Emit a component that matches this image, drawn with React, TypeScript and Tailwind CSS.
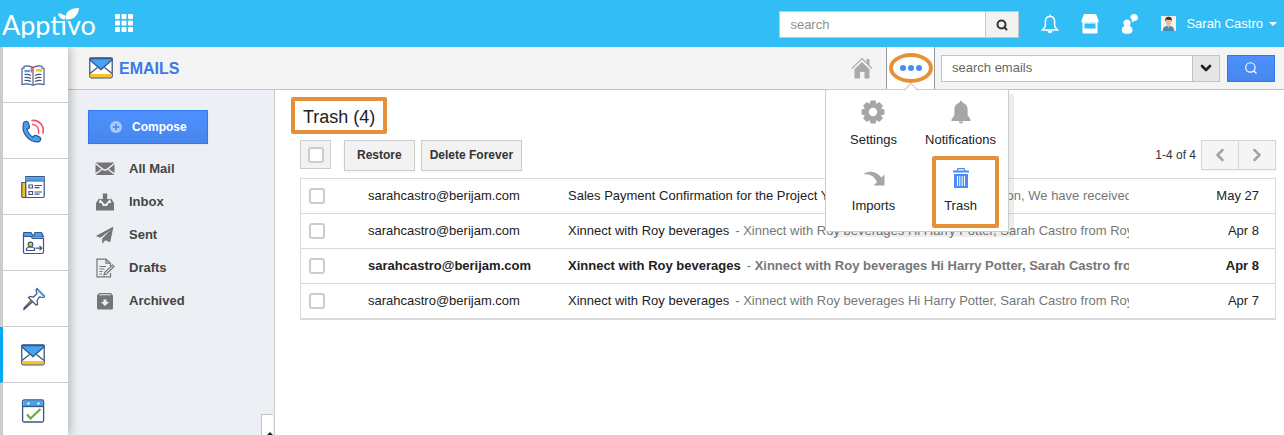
import type { ReactNode } from "react";
import clsx from "clsx";
import { ChevronDown, ChevronLeft, ChevronRight, Search } from "lucide-react";

const NAVY = "#3b5684";
const BLUE = "#42a4f5";
const YELLOW = "#fdc41f";

interface IconProps {
  className?: string;
}

interface Email {
  id: number;
  from: string;
  subject: string;
  preview: string;
  date: string;
  unread?: boolean;
}

const emails: Email[] = [
  {
    id: 1,
    from: "sarahcastro@berijam.com",
    subject: "Sales Payment Confirmation for the Project YMCA Inc",
    preview: "Payment Confirmation, We have received your payment",
    date: "May 27",
  },
  {
    id: 2,
    from: "sarahcastro@berijam.com",
    subject: "Xinnect with Roy beverages",
    preview: "Xinnect with Roy beverages Hi Harry Potter, Sarah Castro from Roy beverages",
    date: "Apr 8",
  },
  {
    id: 3,
    from: "sarahcastro@berijam.com",
    subject: "Xinnect with Roy beverages",
    preview: "Xinnect with Roy beverages Hi Harry Potter, Sarah Castro from Roy beverages",
    date: "Apr 8",
    unread: true,
  },
  {
    id: 4,
    from: "sarahcastro@berijam.com",
    subject: "Xinnect with Roy beverages",
    preview: "Xinnect with Roy beverages Hi Harry Potter, Sarah Castro from Roy beverages",
    date: "Apr 7",
  },
];

function EnvelopeIcon({ className }: IconProps) {
  return (
    <svg viewBox="0 0 24 22" className={className} fill="none" stroke={NAVY} strokeWidth="1.3">
      <rect x="0.8" y="0.8" width="22.4" height="20" rx="1.5" fill="#fff" />
      <path d="M1.3 17h21.4v3.3H1.3z" fill={YELLOW} stroke="none" />
      <path d="M1 16.500l7.500-6M23 16.500l-7.500-6" />
      <path d="M1 1.500h22v1.500L12 12.600 1 3z" fill={BLUE} />
    </svg>
  );
}

function BookIcon() {
  return (
    <svg viewBox="0 0 24 24" className="size-6" fill="none" stroke={NAVY} strokeWidth="1.1">
      <path d="M12 4.500C9 2.800 5 2.800 3 3.200v2H1v16.300c4-1 8-.8 11 .8 3-1.600 7-1.800 11-.8V5.200h-2v-2c-2-.4-6-.4-9 1.300z" fill="#fff" />
      <path d="M12 5v17" />
      <path d="M3.500 8.500c2-.8 4-.8 5.500-.3" stroke={BLUE} strokeWidth="2.400" />
      <path d="M10.700 3v6.500" stroke="#f0566f" strokeWidth="2" />
      <path d="M15 6.200c2-.8 4-.7 6 0v3c-2-.7-4-.7-6-.5z" fill={YELLOW} stroke="none" />
      <path d="M3.500 11.500c2.500-.4 4.500 0 6.500 1M3.500 14.500c2.500-.4 4.500 0 6.500 1M3.500 17.500c2.500-.4 4.500 0 6.500 1M20.500 11.500c-2.500-.4-4.500 0-6.500 1M20.500 14.500c-2.500-.4-4.500 0-6.500 1M20.500 17.500c-2.500-.4-4.500 0-6.500 1" />
    </svg>
  );
}

function PhoneIcon() {
  return (
    <svg viewBox="0 0 24 24" className="size-6" fill="none" strokeLinecap="round">
      <g stroke={NAVY}>
        <path d="M4 7c-1.200 6 5 14 11.500 14" strokeWidth="5" />
        <path d="M5 5l.8 2.500M14.500 19l2.500 1.200" strokeWidth="6.400" />
      </g>
      <g stroke={BLUE}>
        <path d="M4 7c-1.200 6 5 14 11.500 14" strokeWidth="2.600" />
        <path d="M5 5l.8 2.500M14.500 19l2.500 1.200" strokeWidth="4" />
      </g>
      <path d="M11.500 5.500c4-.3 7 3.500 6 9" stroke="#f0566f" strokeWidth="1.500" />
      <path d="M11 1.500c7-.8 12.500 5 11 12.500" stroke="#f0566f" strokeWidth="1.600" />
    </svg>
  );
}

function NewsIcon() {
  return (
    <svg viewBox="0 0 24 24" className="size-6" fill="none" stroke={NAVY} strokeWidth="1.2">
      <path d="M.8 7.500h4v15H2a1.500 1.500 0 0 1-1.200-1.500z" fill={YELLOW} />
      <path d="M4.800 1.500h18.400V21a1.500 1.500 0 0 1-1.500 1.500H4.800z" fill="#fff" />
      <path d="M5.400 2.100h17.200v3.700H5.400z" fill={BLUE} stroke="none" />
      <path d="M4.800 6h18.400M8 10h3.500v3H8zM8 16.500h3.500v3H8zM13.500 10.500h7.500M13.500 12.700h5M13.500 17h7.500M13.500 19.200h5" />
    </svg>
  );
}

function ContactCardIcon() {
  return (
    <svg viewBox="0 0 24 24" className="size-6" fill="none" stroke={NAVY} strokeWidth="1.2">
      <path d="M2.500 6V2.500a1 1 0 0 1 1-1H10L11.500 4H13l1-2.500h6a1 1 0 0 1 1 1L22.500 6z" fill={BLUE} />
      <path d="M2.500 5.500H10L11.500 7.500h11V21a1.500 1.500 0 0 1-1.500 1.500H4A1.500 1.500 0 0 1 2.500 21z" fill="#fff" />
      <path d="M5.500 19.500v-2.200c.8-1 2-1.300 4-1.300s3.200.3 4 1.300v2.200z" />
      <circle cx="9.500" cy="13.500" r="2.300" fill={YELLOW} />
      <path d="M14.500 17.200h6.300M18.500 15l2.300 2.200-2.300 2.200" />
    </svg>
  );
}

function PinIcon() {
  return (
    <svg viewBox="0 0 24 24" className="size-6" fill="none" stroke={NAVY} strokeWidth="1.2">
      <path d="M3 22.500L13 13.500l-1.500-1.500-8.500 9z" fill={YELLOW} />
      <path d="M16 1.500l8 8-1.500 1-4-.5-2.500 3.500.5 4L15 18 7.500 10.500 9 9.500l3.500.5L16 6.500l-1-3.500z" fill="#fff" />
      <path d="M17 3l5.500 5.500" stroke={BLUE} strokeWidth="2.200" />
    </svg>
  );
}

function TaskIcon() {
  return (
    <svg viewBox="0 0 24 24" className="size-6" fill="none" stroke={NAVY} strokeWidth="1.3">
      <rect x="1.600" y="1" width="21" height="22" rx="1.500" fill="#fff" />
      <path d="M2.300 1.700h19.600v5.300H2.300z" fill={BLUE} stroke="none" />
      <path d="M1.600 7.500h21" />
      <path d="M6.500 4.500h2M16.500 4.500h2" stroke="#fff" strokeWidth="2" />
      <path d="M6 15.500l3.500 4L19.500 10" stroke="#65ad35" strokeWidth="2.200" />
    </svg>
  );
}

function StoreIcon() {
  return (
    <svg viewBox="0 0 18 20" className="h-5 w-[18px]" fill="#fff">
      <path d="M3 0h12l2.500 6.500v1.200c0 1.600-2.600 1.600-2.900 0-.3 1.600-2.500 1.600-2.800 0-.3 1.600-2.500 1.600-2.800 0-.3 1.600-2.500 1.600-2.800 0-.3 1.600-2.500 1.600-2.800 0-.3 1.600-2.900 1.600-2.900 0V6.500z" />
      <path fillRule="evenodd" d="M1.500 8.500h15V19.500h-15zM3.500 9.500v5h11v-5z" />
    </svg>
  );
}

function ChatPersonIcon() {
  return (
    <svg viewBox="0 0 18 20" className="h-5 w-[18px]" fill="#fff">
      <circle cx="6" cy="9" r="3.500" />
      <path d="M.8 16c0-3.200 2.500-4.500 5.200-4.500s5.500 1.300 5.500 4.500-2.500 3.800-5.500 3.800S.8 19.200.8 16z" />
      <path d="M13 0c2.200 0 4 1.500 4 3.500S15.500 7 13.500 7L10.500 8.500l.7-2.500C10 5.300 9.400 4.500 9.400 3.500 9.400 1.500 11 0 13 0z" />
    </svg>
  );
}

function BellOutlineIcon() {
  return (
    <svg viewBox="0 0 18 20" className="h-5 w-[18px]" fill="none" stroke="#fff" strokeWidth="1.500">
      <path d="M9 2.500c-3 0-4.600 2.200-4.600 5V11c0 2-1.200 3.500-3 5h15.200c-1.800-1.500-3-3-3-5V7.500c0-2.800-1.600-5-4.600-5zM9 2.500V.5" />
      <path d="M6.500 17h5c-.3 1.600-1.200 2.200-2.500 2.200S6.800 18.600 6.500 17z" fill="#fff" stroke="none" />
    </svg>
  );
}

function Avatar() {
  return (
    <svg viewBox="0 0 15 15" className="size-[15px]">
      <path d="M0 0h15v15H0z" fill="#f3efec" />
      <path d="M1.800 15c.2-4 2-5 5.700-5s5.500 1 5.700 5z" fill="#3e8fb8" />
      <path d="M5.700 9h3.600L7.500 12z" fill="#e9c3a4" />
      <ellipse cx="7.500" cy="5.800" rx="2.800" ry="3.600" fill="#e9bd9a" />
      <path d="M4.300 5.500C3.800 2 5.500.8 7.800.8s3.700 1.700 3 4.700L10 3.800C8 4 6.500 3.800 5.500 3.500z" fill="#40302b" />
    </svg>
  );
}

function HomeIcon() {
  return (
    <svg viewBox="0 0 22 22" className="size-[22px]" fill="#a9a9a9">
      <path d="M3.500 12.300L11 5l7.500 7.300v9.200h-5V15H9v6.500H3.500z" />
      <path d="M15.500 2h3v6.500l-3-3z" />
      <path d="M.8 11.700L11 1.500l10.200 10.200" fill="none" stroke="#a9a9a9" strokeWidth="1.200" />
    </svg>
  );
}

function GearIcon() {
  return (
    <svg viewBox="-12 -12 24 24" className="size-6" fill="#a6a6a6">
      {[0, 45, 90, 135].map((angle) => (
        <path key={angle} d="M-2.500-11.500h5l1 4v15l-1 4h-5l-1-4v-15z" transform={`rotate(${angle})`} />
      ))}
      <circle r="8.800" />
      <circle r="4.200" fill="#fff" />
    </svg>
  );
}

function BellIcon() {
  return (
    <svg viewBox="0 0 24 24" className="size-6" fill="#a6a6a6">
      <path d="M12 1c1 0 1.500.7 1.600 1.700 3.400.8 5 3.300 5 6.800V15l2.900 4.500V21h-19v-1.500L5.400 15V9.500c0-3.500 1.600-6 5-6.800C10.500 1.700 11 1 12 1z" />
      <path d="M9.700 21.500h4.600c-.2 1.300-1 2-2.300 2s-2.100-.7-2.300-2z" />
    </svg>
  );
}

function ImportIcon() {
  return (
    <svg viewBox="0 0 24 24" className="size-6" fill="#a6a6a6">
      <path d="M1.500 8.500C4.500 5 13 4 19.500 11.500L22.500 8.500V19.500H11.500L15 16C12.500 10.500 8 7.500 1.500 8.500z" />
    </svg>
  );
}

function TrashIcon() {
  return (
    <svg viewBox="0 0 24 24" className="size-6" fill="#4a8cf7">
      <path fillRule="evenodd" d="M8.500 2h7l1 2.500H20v2H4v-2h3.500zM9.300 3.200l-.5 1.300h6.400l-.5-1.300z" />
      <path fillRule="evenodd" d="M5 8h14v14H5zM8 10v10h1V10zm2.300 0v10h1V10zm2.400 0v10h1V10zm2.300 0v10h1V10z" />
    </svg>
  );
}

function AllMailIcon() {
  return (
    <svg viewBox="0 0 20 20" className="size-5" fill="#757575">
      <path d="M.5 3.500h19l-7.500 6c-1.200 1-2.800 1-4 0zM.5 5.200L6.300 10 .5 14zM19.500 5.200L13.700 10l5.800 4zM7.300 10.800c1.600 1.300 3.800 1.300 5.400 0L19.500 16H.5z" />
    </svg>
  );
}

function InboxIcon() {
  return (
    <svg viewBox="0 0 20 20" className="size-5" fill="#757575">
      <path d="M7.800 1.500h4.400V7h3L10 12.500 4.800 7h3z" />
      <path d="M4 6.500H5L3.800 11h2.700l1.300 3h4.400l1.300-3h2.700L15 6.500h1l3 4.500v7.500H1V11z" />
    </svg>
  );
}

function SentIcon() {
  return (
    <svg viewBox="0 0 20 20" className="size-5" fill="#757575">
      <path d="M18.500 1.500L.8 11l4.700 1.800L15.500 5 7.200 13.500V19l3-3.800 5 2z" />
    </svg>
  );
}

function DraftIcon() {
  return (
    <svg viewBox="0 0 20 20" className="size-5" fill="none" stroke="#757575" strokeWidth="1.200">
      <path d="M15.500 15v3.800h-13.500V1.200H11l4.500 4V8M11 1.200v4h4.500" />
      <path d="M4.500 8.500H11M4.500 11h5M4.500 13.500h3M4.500 16h2.500" />
      <path d="M17.500 7l1.500 1.500-7.500 7.500-2.500.8.800-2.500z" fill="#ecf0f5" />
    </svg>
  );
}

function ArchiveIcon() {
  return (
    <svg viewBox="0 0 20 20" className="size-5">
      <path fillRule="evenodd" fill="#757575" d="M4 2h12l2 2.500V17a1.500 1.500 0 0 1-1.500 1.500h-13A1.500 1.500 0 0 1 2 17V4.500zM4.500 3.200L3.800 4.300h12.400l-.7-1.100zM8.500 8.500V11H5.800l4.200 4 4.200-4h-2.700V8.500z" />
    </svg>
  );
}

const apps = [
  { label: "Contacts book", icon: <BookIcon /> },
  { label: "Calls", icon: <PhoneIcon /> },
  { label: "News", icon: <NewsIcon /> },
  { label: "Contact cards", icon: <ContactCardIcon /> },
  { label: "Pinned", icon: <PinIcon /> },
  { label: "Emails", icon: <EnvelopeIcon className="h-[22px] w-6" />, active: true },
  { label: "Tasks", icon: <TaskIcon /> },
];

const folders = [
  { label: "All Mail", icon: <AllMailIcon /> },
  { label: "Inbox", icon: <InboxIcon /> },
  { label: "Sent", icon: <SentIcon /> },
  { label: "Drafts", icon: <DraftIcon /> },
  { label: "Archived", icon: <ArchiveIcon /> },
];

function Logo() {
  return (
    <a href="#" className="relative block h-[38px] overflow-hidden pt-[9px] font-['Lato',sans-serif] text-[27px] leading-8 text-white">
      Apptivo
      <svg viewBox="0 0 22 12" className="absolute top-2 right-4 h-3 w-[22px]" fill="#fff">
        <path d="M8 11.500C6.500 4 12 0 21 0c-.5 7-5 12-13 11.500z" />
        <path d="M7 11.500C3 11.500 1 9 0 5.500c4-.3 7 1.500 7 6z" />
      </svg>
    </a>
  );
}

function TopBar() {
  return (
    <header className="relative z-20 flex h-[47px] shrink-0 items-center bg-[#32bdf5] pr-[7px] pl-0.5 text-white">
      <div className="self-start">
        <Logo />
      </div>
      <button type="button" aria-label="Apps" className="mb-px ml-[19px]">
        <svg viewBox="0 0 18 18" className="size-[18px]" fill="#fff">
          {[0, 6.5, 13].map((y) =>
            [0, 6.5, 13].map((x) => <rect key={`${x}-${y}`} x={x} y={y} width="5" height="5" rx="1" />)
          )}
        </svg>
      </button>
      <form className="mt-0.5 ml-auto flex h-[27px] w-60 border border-[#c6c6c6] bg-white">
        <input
          type="search"
          aria-label="Search"
          placeholder="search"
          className="min-w-0 flex-1 px-2.5 text-[13px] text-gray-800 outline-none placeholder:text-[#8e8e8e]"
        />
        <button type="button" aria-label="Go" className="flex w-[33px] items-center justify-center border-l border-[#c6c6c6] bg-[#f2f2f2]">
          <Search className="size-3 text-[#333]" strokeWidth={4} />
        </button>
      </form>
      <div className="ml-[22px] flex items-center gap-[22px]">
        <button type="button" aria-label="Notifications"><BellOutlineIcon /></button>
        <button type="button" aria-label="App store"><StoreIcon /></button>
        <button type="button" aria-label="Chat"><ChatPersonIcon /></button>
        <button type="button" className="flex items-center text-[13px]">
          <Avatar />
          <span className="ml-2.5">Sarah Castro</span>
          <svg viewBox="0 0 8 4" className="ml-1.5 h-1 w-2" fill="#fff">
            <path d="M0 0h8L4 4z" />
          </svg>
        </button>
      </div>
    </header>
  );
}

function AppRail() {
  return (
    <nav aria-label="Apps" className="relative z-10 w-[68px] shrink-0 bg-white shadow-[3px_0_8px_rgba(0,0,0,0.22)]">
      {apps.map((app) => (
        <a
          key={app.label}
          href="#"
          aria-label={app.label}
          className={clsx(
            "flex h-14 items-center justify-center border-b border-l-[3px] border-b-[#ccc] pr-[5px]",
            app.active ? "border-l-[#03a9f4]" : "border-l-[#ccc]"
          )}
        >
          {app.icon}
        </a>
      ))}
    </nav>
  );
}

function MenuItem({ label, icon, highlighted }: { label: string; icon: ReactNode; highlighted?: boolean }) {
  return (
    <button
      type="button"
      className={clsx(
        "flex flex-col items-center gap-1.5 justify-self-center text-[13px] leading-5 text-[#222]",
        highlighted && "h-[72px] w-[67px] rounded-xs border-4 border-[#e69138] pt-1.5 pr-2.5"
      )}
    >
      {icon}
      {label}
    </button>
  );
}

function MoreMenu() {
  return (
    <div className="relative flex w-[49px] items-center justify-center self-stretch border-x border-[#999] bg-white">
      <button
        type="button"
        aria-label="More"
        className="flex h-[30px] w-11 shrink-0 items-center justify-center gap-0.5 rounded-[50%] border-4 border-[#e69138]"
      >
        <span className="size-1.5 rounded-full bg-[#4a8cf7]" />
        <span className="size-1.5 rounded-full bg-[#4a8cf7]" />
        <span className="size-1.5 rounded-full bg-[#4a8cf7]" />
      </button>
      <div className="absolute top-full -left-[62px] z-20 grid h-[143px] w-[184px] grid-cols-2 grid-rows-[56px_72px] rounded-xs border border-[#ccc] bg-white px-1 pt-2.5 shadow-[5px_5px_0_rgba(0,0,0,0.07)]">
        <svg viewBox="0 0 14 8" className="absolute -top-[7px] left-[78px] h-2 w-3.5" fill="#fff" stroke="#aaa">
          <path d="M0 7.500L7 .5l7 7" />
        </svg>
        <MenuItem label="Settings" icon={<GearIcon />} />
        <MenuItem label="Notifications" icon={<BellIcon />} />
        <div className="grid pt-2.5">
          <MenuItem label="Imports" icon={<ImportIcon />} />
        </div>
        <div className="grid pl-2.5">
          <MenuItem label="Trash" icon={<TrashIcon />} highlighted />
        </div>
      </div>
    </div>
  );
}

function SubHeader() {
  return (
    <div className="flex h-[43px] shrink-0 items-center border-b border-[#c3c3c3] bg-[#f4f4f4] pr-[9px] pl-[21px]">
      <EnvelopeIcon className="h-[22px] w-6" />
      <h1 className="ml-1.5 pt-0.5 text-base font-bold text-[#3b78e7]">EMAILS</h1>
      <a href="#" aria-label="Home" className="mr-[13px] ml-auto">
        <HomeIcon />
      </a>
      <MoreMenu />
      <form className="ml-1.5 flex items-center">
        <div className="flex h-[27px] w-[279px] border border-[#c3c3c3] bg-white">
          <input
            type="search"
            aria-label="Search emails"
            placeholder="search emails"
            className="min-w-0 flex-1 px-2.5 text-[13px] text-gray-800 outline-none placeholder:text-[#666]"
          />
          <button type="button" aria-label="Search options" className="flex w-[27px] items-center justify-center border-l border-[#c3c3c3] bg-[#e6e6e6]">
            <ChevronDown className="size-4 text-[#222]" strokeWidth={4} />
          </button>
        </div>
        <button type="button" aria-label="Search" className="ml-[7px] flex h-[27px] w-12 items-center justify-center border border-[#3079ed] bg-linear-to-b from-[#4d90fe] to-[#4787ed]">
          <Search className="size-3.5 text-white" />
        </button>
      </form>
    </div>
  );
}

function Sidebar() {
  return (
    <aside className="flex w-[207px] shrink-0 flex-col border-r border-[#ccc] bg-[#ecf0f5] pt-5">
      <button
        type="button"
        className="ml-5 flex h-[34px] w-[120px] shrink-0 items-center gap-2.5 border border-[#3079ed] bg-linear-to-b from-[#4d90fe] to-[#4787ed] pl-[21px] text-xs font-bold text-white shadow-xs"
      >
        <svg viewBox="0 0 12 12" className="size-3">
          <circle cx="6" cy="6" r="6" fill="#a9cbff" />
          <path d="M6 2.800v6.400M2.800 6h6.400" stroke="#4d90fe" strokeWidth="1.800" />
        </svg>
        Compose
      </button>
      <ul className="mt-2">
        {folders.map((folder) => (
          <li key={folder.label}>
            <a href="#" className="flex h-[33px] items-center gap-3.5 pl-[27px] text-[13px] font-bold text-[#444]">
              {folder.icon}
              {folder.label}
            </a>
          </li>
        ))}
      </ul>
      <button type="button" aria-label="Collapse sidebar" className="mt-auto mr-px flex h-[21px] w-3 items-end justify-end self-end border-t border-l border-[#c3c3c3] bg-white">
        <svg viewBox="0 0 6 3" className="h-[3px] w-1.5" fill="#222">
          <path d="M3 0l3 3H0z" />
        </svg>
      </button>
    </aside>
  );
}

function Checkbox({ label }: { label: string }) {
  return (
    <input
      type="checkbox"
      aria-label={label}
      className="block size-4 appearance-none rounded-[3px] border-2 border-[#ccc] bg-white checked:bg-[#4d90fe]"
    />
  );
}

function Toolbar() {
  return (
    <div className="mt-1.5 ml-[9px] flex items-start">
      <div className="flex h-[29px] w-[31px] items-center justify-center border border-[#ccc] bg-[#f2f2f2]">
        <Checkbox label="Select all" />
      </div>
      <button type="button" className="ml-[13px] h-[31px] border border-[#ccc] bg-[#f2f2f2] px-3 pb-0.5 text-xs font-bold text-[#333] shadow-xs">
        Restore
      </button>
      <button type="button" className="ml-1.5 h-[31px] border border-[#ccc] bg-[#f2f2f2] px-2 pb-0.5 text-xs font-bold text-[#333] shadow-xs">
        Delete Forever
      </button>
      <div className="ml-auto flex items-center gap-[5px] text-xs text-[#333]">
        1-4 of 4
        <div className="flex h-[30px] border border-[#d4d4d4] bg-[#f5f5f5] shadow-xs">
          <button type="button" aria-label="Previous page" className="flex w-9 items-center justify-center">
            <ChevronLeft className="size-5 text-[#a3a3a3]" strokeWidth={3} />
          </button>
          <button type="button" aria-label="Next page" className="flex w-[37px] items-center justify-center border-l border-[#d4d4d4]">
            <ChevronRight className="size-5 text-[#a3a3a3]" strokeWidth={3} />
          </button>
        </div>
      </div>
    </div>
  );
}

function EmailTable() {
  return (
    <div className="mt-[7px] ml-[9px] border border-b-2 border-[#dadada]">
      <table className="w-full table-fixed border-separate border-spacing-0 text-[13px] text-[#222]">
        <colgroup>
          <col className="w-[67px]" />
          <col className="w-[200px]" />
          <col />
          <col className="w-[146px]" />
        </colgroup>
        <tbody>
          {emails.map((email, i) => {
            const cell = clsx("p-0", i < emails.length - 1 ? "h-[35px] border-b border-[#dadada]" : "h-[34px]");
            return (
              <tr key={email.id} className={clsx(email.unread && "font-bold")}>
                <td className={cell}>
                  <div className="pl-2">
                    <Checkbox label={`Select ${email.subject}`} />
                  </div>
                </td>
                <td className={cell}>{email.from}</td>
                <td className={cell}>
                  <div className="overflow-hidden whitespace-nowrap">
                    {email.subject}
                    <span className="ml-1.5 text-[#777]">
                      <span className="font-normal">-</span> {email.preview}
                    </span>
                  </div>
                </td>
                <td className={cell}>
                  <div className="pr-4 text-right">{email.date}</div>
                </td>
              </tr>
            );
          })}
        </tbody>
      </table>
    </div>
  );
}

export default function App() {
  return (
    <div className="flex h-screen flex-col overflow-hidden bg-white font-['Liberation_Sans',Arial,sans-serif]">
      <TopBar />
      <div className="flex min-h-0 flex-1">
        <AppRail />
        <div className="flex min-w-0 flex-1 flex-col">
          <SubHeader />
          <div className="flex min-h-0 flex-1">
            <Sidebar />
            <main className="min-w-0 flex-1 pt-[7px] pr-2 pl-4">
              <h2 className="flex h-[37px] w-fit items-center rounded-xs border-4 border-[#e69138] px-2 pt-0.5 text-lg text-[#222]">
                Trash (4)
              </h2>
              <Toolbar />
              <EmailTable />
            </main>
          </div>
        </div>
      </div>
    </div>
  );
}
